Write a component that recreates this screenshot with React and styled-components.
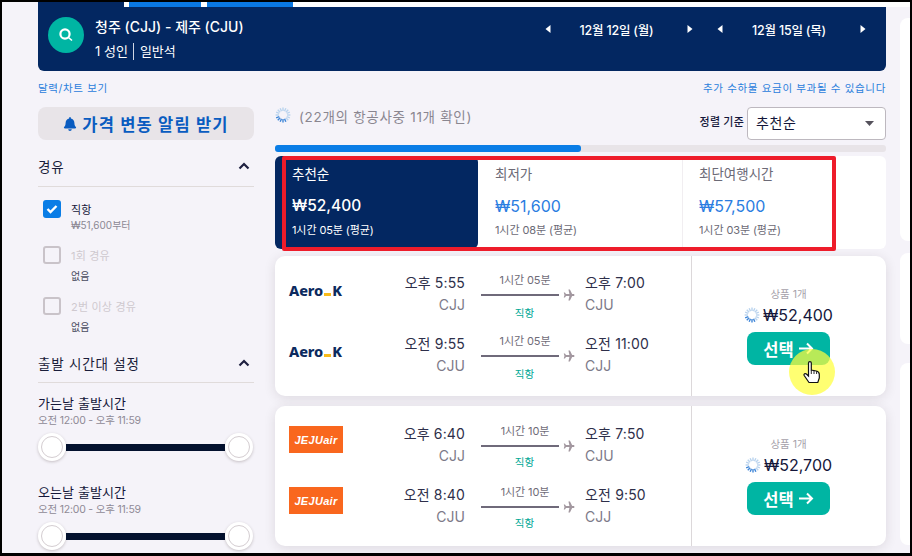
import React from "react";
import styled, { createGlobalStyle } from "styled-components";
import { FaBell } from "react-icons/fa";

const Global = createGlobalStyle`
  html, body { margin: 0; padding: 0; background: #000; }
  * { box-sizing: border-box; }
  body { font-family: Inter, "Noto Sans CJK KR", "Noto Sans", sans-serif; }
`;

const Frame = styled.div`
  position: relative;
  width: 912px;
  height: 556px;
  overflow: hidden;
  display: flex;
  border-style: solid;
  border-color: #000;
  border-width: 2px 2px 3px 2px;
  background: #f5f3f9;
`;
const Main = styled.div`
  width: 848px;
  margin-left: 36px;
  flex: none;
`;
const Rail = styled.div`
  width: 10px;
  margin-left: 14px;
  flex: none;
  display: flex;
  flex-direction: column;
  padding-top: 16px;
`;
const RailPanel = styled.div`
  background: #fff;
  height: ${(p) => p.$h}px;
  margin-bottom: ${(p) => p.$gap}px;
  border-radius: 8px 0 0 8px;
`;
const TopStrip = styled.div`
  position: absolute;
  top: 0;
  left: 122px;
  right: 0;
  height: 5px;
  background: #fff;
  display: flex;
  padding-left: 5px;
`;
const StripTab = styled.div`
  width: ${(p) => p.$w}px;
  margin-right: 6px;
  background: #0a78e2;
`;
const Header = styled.header`
  height: 69px;
  background: #032761;
  border-radius: 0 0 6px 6px;
  display: flex;
  padding: 15px 0 0 10px;
  color: #fff;
`;
const SearchBadge = styled.div`
  width: 36px;
  height: 36px;
  border-radius: 50%;
  background: #00b5a3;
  display: flex;
  align-items: center;
  justify-content: center;
  flex: none;
`;
const Route = styled.div`
  margin-left: 11px;
  margin-top: -1px;
`;
const RouteTitle = styled.div`
  font-size: 14px;
  line-height: 22px;
  font-weight: 500;
`;
const RouteMeta = styled.div`
  margin-top: 4px;
  display: flex;
  align-items: center;
  font-size: 13px;
  line-height: 18px;
`;
const MetaDivider = styled.span`
  width: 1px;
  height: 17px;
  background: #cfd6e4;
  margin: 0 6px 0 5px;
`;
const DateGroup = styled.div`
  margin-left: auto;
  margin-top: 1px;
  display: flex;
  align-items: flex-start;
  padding-right: 20px;
`;
const DateNav = styled.div`
  width: ${(p) => p.$w}px;
  height: 22px;
  display: flex;
  align-items: center;
  justify-content: space-between;
  margin-left: ${(p) => p.$ml || 0}px;
`;
const DateText = styled.span`
  font-size: 12.5px;
  font-weight: 500;
  letter-spacing: -0.2px;
  margin-right: 5px;
`;
const LinkRow = styled.div`
  height: 36px;
  display: flex;
  align-items: center;
  justify-content: space-between;
  padding-bottom: 3px;
`;
const SmallLink = styled.span`
  font-size: 10.5px;
  color: #2a80dc;
  letter-spacing: 0.65px;
`;
const Columns = styled.div`
  display: flex;
  gap: 21px;
`;
const Sidebar = styled.aside`
  width: 216px;
  flex: none;
`;
const AlertButton = styled.div`
  height: 33px;
  border-radius: 8px;
  background: #e8e4e8;
  display: flex;
  align-items: center;
  justify-content: center;
  gap: 5px;
  color: #0a5cc0;
  font-size: 16.5px;
  font-weight: 700;
  letter-spacing: 1.2px;
`;
const SectionHead = styled.div`
  height: ${(p) => p.$h}px;
  margin-top: ${(p) => p.$mt}px;
  padding-top: 8px;
  border-bottom: 1px solid #e0dbdb;
  display: flex;
  align-items: flex-start;
  justify-content: space-between;
  padding-right: 4px;
  color: #1a1d3a;
  font-size: 13.5px;
  line-height: 20px;
  letter-spacing: 0.8px;
`;
const Option = styled.div`
  height: ${(p) => p.$h}px;
  padding-left: 5px;
  display: flex;
  gap: 10px;
`;
const Box = styled.div`
  width: 18px;
  height: 18px;
  flex: none;
  border-radius: 3px;
  display: flex;
  align-items: center;
  justify-content: center;
  background: ${(p) => (p.$checked ? "#0a7de6" : "transparent")};
  border: ${(p) => (p.$checked ? "none" : "2px solid #c9c3c9")};
`;
const OptionBody = styled.div`
  display: flex;
  flex-direction: column;
  padding-top: 1px;
`;
const OptionLabel = styled.span`
  font-size: 11px;
  line-height: 18px;
  color: ${(p) => (p.$off ? "#cfc9cf" : "#14163a")};
  letter-spacing: 0.2px;
`;
const OptionSub = styled.span`
  font-size: 10px;
  line-height: 14px;
  margin-top: ${(p) => p.$mt}px;
  color: ${(p) => (p.$dark ? "#4a4c60" : "#8c8894")};
`;
const TimeBlock = styled.div`
  height: 89px;
  padding-top: 12px;
`;
const TimeTitle = styled.div`
  font-size: 13px;
  line-height: 16px;
  color: #14163a;
  letter-spacing: 0.1px;
`;
const TimeSub = styled.div`
  font-size: 10.5px;
  line-height: 14px;
  margin-top: 3px;
  color: #8f8a96;
  letter-spacing: -0.2px;
`;
const Slider = styled.div`
  margin-top: 5px;
  display: flex;
  align-items: center;
  width: 215px;
`;
const Handle = styled.div`
  width: 28px;
  height: 28px;
  flex: none;
  border-radius: 50%;
  background: #fff;
  box-shadow: 0 1px 3px rgba(60, 40, 40, 0.25);
  display: flex;
  align-items: center;
  justify-content: center;
  &::after {
    content: "";
    width: 20px;
    height: 20px;
    border-radius: 50%;
    border: 1px solid #d4cdd1;
  }
`;
const Track = styled.div`
  flex: 1;
  height: 7px;
  background: #03112e;
`;
const Results = styled.section`
  width: 611px;
  flex: none;
  position: relative;
`;
const StatusRow = styled.div`
  height: 33px;
  display: flex;
  align-items: flex-start;
`;
const StatusText = styled.span`
  margin-left: 8px;
  color: #8a8690;
  font-size: 13.5px;
  line-height: 20px;
  letter-spacing: 0.7px;
`;
const SortLabel = styled.span`
  margin-left: auto;
  margin-top: 7px;
  font-size: 11px;
  line-height: 16px;
  font-weight: 500;
  color: #14163a;
  letter-spacing: 0.2px;
`;
const Select = styled.div`
  width: 139px;
  height: 33px;
  margin-left: 3px;
  background: #fff;
  border: 1px solid #bdb8bf;
  border-radius: 4px;
  display: flex;
  align-items: center;
  justify-content: space-between;
  padding: 0 11px 3px 8px;
  font-size: 14px;
  letter-spacing: 0.6px;
  color: #14163a;
`;
const SelectCaret = styled.svg`
  margin-top: 3px;
`;
const Progress = styled.div`
  height: 7px;
  margin-top: 5px;
  background: #e8e4e8;
  border-radius: 3px;
  overflow: hidden;
`;
const ProgressFill = styled.div`
  height: 100%;
  background: #0a7de6;
  border-radius: 0 3px 3px 0;
`;
const SortTabs = styled.div`
  position: relative;
  margin-top: 4px;
  height: 93px;
  background: #fff;
  border-radius: 6px;
  display: flex;
`;
const SortTab = styled.div`
  width: ${(p) => p.$w}px;
  padding-left: ${(p) => p.$pl}px;
  padding-top: 9px;
  background: ${(p) => (p.$active ? "#032761" : "transparent")};
  border-radius: ${(p) => (p.$active ? "6px" : "0")};
  color: ${(p) => (p.$active ? "#fff" : "#6c6a76")};
  border-right: ${(p) => (p.$line ? "1px solid #f1eef1" : "none")};
`;
const TabName = styled.div`
  font-size: 13.5px;
  line-height: 18px;
`;
const TabPrice = styled.div`
  margin-top: 13px;
  font-size: ${(p) => (p.$active ? 15.5 : 16)}px;
  line-height: 20px;
  font-weight: ${(p) => (p.$active ? 500 : 400)};
  color: ${(p) => (p.$active ? "#fff" : "#2a7de1")};
`;
const TabMeta = styled.div`
  margin-top: 6px;
  font-size: 11px;
  line-height: 16px;
  letter-spacing: -0.1px;
`;
const RedMark = styled.div`
  position: absolute;
  left: 7px;
  top: 0;
  width: 554px;
  height: 95px;
  border: 4px solid #ee1c2a;
  border-radius: 2px;
  pointer-events: none;
`;
const FlightCard = styled.article`
  height: 140px;
  margin-top: ${(p) => p.$mt}px;
  background: #fff;
  border-radius: 10px;
  box-shadow: 0 2px 12px rgba(50, 30, 40, 0.12);
  display: flex;
`;
const Legs = styled.div`
  width: 416px;
  flex: none;
  padding-top: ${(p) => p.$pt}px;
  padding-left: 14px;
`;
const Leg = styled.div`
  height: 61px;
  display: grid;
  grid-template-columns: 100px 76px 110px 1fr;
`;
const LogoCell = styled.div`
  display: flex;
  align-items: center;
  height: ${(p) => p.$h}px;
`;
const AeroLogo = styled.div`
  display: flex;
  align-items: baseline;
  color: #0c2a5e;
  font-family: "Noto Sans", sans-serif;
  font-weight: 800;
  font-size: 14.5px;
  letter-spacing: -0.1px;
`;
const AeroDash = styled.span`
  display: inline-block;
  width: 7px;
  height: 3px;
  margin: 0 1px;
  background: #f7bb1b;
`;
const JejuLogo = styled.div`
  width: 54px;
  height: 27px;
  background: #f9671e;
  color: #fff;
  display: flex;
  align-items: center;
  justify-content: center;
  font-family: "Liberation Sans", sans-serif;
  font-style: italic;
  font-weight: 700;
  font-size: 11px;
  letter-spacing: 0.3px;
`;
const TimeCol = styled.div`
  text-align: ${(p) => p.$align};
  padding-left: ${(p) => (p.$align === "left" ? 10 : 0)}px;
  white-space: nowrap;
`;
const Clock = styled.div`
  font-size: 14px;
  line-height: 22px;
  font-weight: 400;
  color: #2e2f4a;
  letter-spacing: 0.15px;
`;
const Code = styled.div`
  font-size: 14px;
  line-height: 22px;
  color: #7d7a88;
`;
const Mid = styled.div`
  padding-left: 16px;
  display: flex;
  flex-direction: column;
`;
const Duration = styled.div`
  width: 88px;
  height: 16px;
  text-align: center;
  font-size: 11px;
  line-height: 16px;
  color: #6f6c78;
  letter-spacing: -0.1px;
`;
const PathRow = styled.div`
  height: 14px;
  display: flex;
  align-items: center;
  gap: 4px;
`;
const PathLine = styled.div`
  width: 79px;
  height: ${(p) => p.$h}px;
  background: #6f6a7a;
`;
const Direct = styled.div`
  width: 87px;
  height: 16px;
  margin-top: ${(p) => p.$mt}px;
  text-align: center;
  font-size: 10.5px;
  line-height: 16px;
  color: #00a896;
`;
const PricePanel = styled.div`
  flex: 1;
  border-left: 1px solid #dcd8da;
  padding: 32px 1px 0 0;
  display: flex;
  flex-direction: column;
  align-items: center;
`;
const ProductCount = styled.div`
  font-size: 10.5px;
  line-height: 14px;
  color: #a5a1aa;
`;
const PriceLine = styled.div`
  margin-top: 2px;
  display: flex;
  align-items: center;
  gap: 3px;
  height: 22px;
  font-size: 16px;
  color: #14163a;
`;
const SelectButton = styled.div`
  margin-top: 6px;
  width: 83px;
  height: 33px;
  border-radius: 8px;
  background: #00b5a3;
  color: #fff;
  font-size: 16.5px;
  font-weight: 700;
  display: flex;
  align-items: center;
  justify-content: center;
  gap: 4px;
`;
const CursorHalo = styled.div`
  position: absolute;
  left: 514px;
  top: 242px;
  width: 46px;
  height: 46px;
  border-radius: 50%;
  background: rgba(255, 255, 60, 0.72);
  display: flex;
  align-items: center;
  justify-content: center;
`;
const ChevronIcon = styled.svg`
  margin-top: 5px;
`;
const CheckGap = styled.div`
  height: 13px;
`;

const Tri = ({ dir }) => (
  <svg width="6" height="8" viewBox="0 0 6 8">
    <polygon points={dir === "l" ? "5.5,0 0.5,4 5.5,8" : "0.5,0 5.5,4 0.5,8"} fill="#fff" />
  </svg>
);

const Chevron = () => (
  <ChevronIcon width="12" height="8" viewBox="0 0 12 8">
    <path d="M1.5 6.5 L6 2 L10.5 6.5" fill="none" stroke="#1f2040" strokeWidth="2.2" />
  </ChevronIcon>
);

const Spinner = ({ size = 16 }) => {
  const ticks = Array.from({ length: 16 }, (_, i) => i);
  return (
    <svg width={size} height={size} viewBox="0 0 16 16">
      {ticks.map((i) => {
        const a = (i / 16) * Math.PI * 2;
        const shade = i > 2 && i < 8 ? "#3f86d8" : "#b9d3ee";
        return (
          <line
            key={i}
            x1={8 + 4 * Math.cos(a)}
            y1={8 + 4 * Math.sin(a)}
            x2={8 + 7.4 * Math.cos(a)}
            y2={8 + 7.4 * Math.sin(a)}
            stroke={shade}
            strokeWidth="1.4"
          />
        );
      })}
    </svg>
  );
};

const PlaneIcon = () => (
  <svg width="12" height="12" viewBox="0 0 24 24">
    <path
      d="M14 1 L11 1 L13 10 L6 10 L4 7 L1.5 7 L3 12 L1.5 17 L4 17 L6 14 L13 14 L11 23 L14 23 L18.5 14 L22 14 Q24.5 12 22 10 L18.5 10 Z"
      fill="#a2979f"
    />
  </svg>
);

const Arrow = () => (
  <svg width="16" height="13" viewBox="0 0 16 13">
    <path d="M1 6.5 H14 M9 1.5 L14 6.5 L9 11.5" fill="none" stroke="#fff" strokeWidth="2" />
  </svg>
);

const flights = [
  {
    logo: "aero",
    mt: 7,
    pt: 16,
    directGap: 4,
    price: "₩52,400",
    legs: [
      { dep: "오후 5:55", from: "CJJ", dur: "1시간 05분", arr: "오후 7:00", to: "CJU", h: 1.5 },
      { dep: "오전 9:55", from: "CJU", dur: "1시간 05분", arr: "오전 11:00", to: "CJJ", h: 2 },
    ],
  },
  {
    logo: "jeju",
    mt: 10,
    pt: 17,
    directGap: 2,
    price: "₩52,700",
    legs: [
      { dep: "오후 6:40", from: "CJJ", dur: "1시간 10분", arr: "오후 7:50", to: "CJU", h: 2 },
      { dep: "오전 8:40", from: "CJU", dur: "1시간 10분", arr: "오전 9:50", to: "CJJ", h: 2 },
    ],
  },
];

const tabs = [
  { name: "추천순", price: "₩52,400", meta: "1시간 05분 (평균)", w: 203, pl: 17, active: true },
  { name: "최저가", price: "₩51,600", meta: "1시간 08분 (평균)", w: 205, pl: 17, line: true },
  { name: "최단여행시간", price: "₩57,500", meta: "1시간 03분 (평균)", w: 203, pl: 16 },
];

const TimeFilter = ({ title }) => (
  <TimeBlock>
    <TimeTitle>{title}</TimeTitle>
    <TimeSub>오전 12:00 - 오후 11:59</TimeSub>
    <Slider>
      <Handle />
      <Track />
      <Handle />
    </Slider>
  </TimeBlock>
);

export default function App() {
  return (
    <>
      <Global />
      <Frame>
        <TopStrip>
          <StripTab $w={72} />
          <StripTab $w={86} />
        </TopStrip>
        <Main>
          <Header>
            <SearchBadge>
              <svg width="18" height="18" viewBox="0 0 18 18">
                <circle cx="8" cy="8" r="4.6" fill="none" stroke="#fff" strokeWidth="2.2" />
                <path d="M11.5 11.5 L15 14.5" stroke="#fff" strokeWidth="1.6" />
              </svg>
            </SearchBadge>
            <Route>
              <RouteTitle>청주 (CJJ) - 제주 (CJU)</RouteTitle>
              <RouteMeta>
                1 성인
                <MetaDivider />
                일반석
              </RouteMeta>
            </Route>
            <DateGroup>
              <DateNav $w={148}>
                <Tri dir="l" />
                <DateText>12월 12일 (월)</DateText>
                <Tri dir="r" />
              </DateNav>
              <DateNav $w={149} $ml={24}>
                <Tri dir="l" />
                <DateText>12월 15일 (목)</DateText>
                <Tri dir="r" />
              </DateNav>
            </DateGroup>
          </Header>
          <LinkRow>
            <SmallLink>달력/차트 보기</SmallLink>
            <SmallLink>추가 수하물 요금이 부과될 수 있습니다</SmallLink>
          </LinkRow>
          <Columns>
            <Sidebar>
              <AlertButton>
                <FaBell size={14} />
                가격 변동 알림 받기
              </AlertButton>
              <SectionHead $h={38} $mt={9}>
                경유
                <Chevron />
              </SectionHead>
              <CheckGap />
              <Option $h={46}>
                <Box $checked>
                  <svg width="12" height="10" viewBox="0 0 12 10">
                    <path d="M1.5 5 L4.5 8 L10.5 2" fill="none" stroke="#fff" strokeWidth="2.4" />
                  </svg>
                </Box>
                <OptionBody>
                  <OptionLabel>직항</OptionLabel>
                  <OptionSub $mt={-1}>₩51,600부터</OptionSub>
                </OptionBody>
              </Option>
              <Option $h={51}>
                <Box />
                <OptionBody>
                  <OptionLabel $off>1회 경유</OptionLabel>
                  <OptionSub $mt={4} $dark>없음</OptionSub>
                </OptionBody>
              </Option>
              <Option $h={49}>
                <Box />
                <OptionBody>
                  <OptionLabel $off>2번 이상 경유</OptionLabel>
                  <OptionSub $mt={4} $dark>없음</OptionSub>
                </OptionBody>
              </Option>
              <SectionHead $h={37} $mt={0}>
                출발 시간대 설정
                <Chevron />
              </SectionHead>
              <TimeFilter title="가는날 출발시간" />
              <TimeFilter title="오는날 출발시간" />
            </Sidebar>
            <Results>
              <StatusRow>
                <Spinner />
                <StatusText>(22개의 항공사중 11개 확인)</StatusText>
                <SortLabel>정렬 기준</SortLabel>
                <Select>
                  추천순
                  <SelectCaret width="9" height="5" viewBox="0 0 9 5">
                    <polygon points="0,0 9,0 4.5,5" fill="#55525c" />
                  </SelectCaret>
                </Select>
              </StatusRow>
              <Progress>
                <ProgressFill style={{ width: "50%" }} />
              </Progress>
              <SortTabs>
                {tabs.map((t) => (
                  <SortTab key={t.name} $w={t.w} $pl={t.pl} $active={t.active} $line={t.line}>
                    <TabName>{t.name}</TabName>
                    <TabPrice $active={t.active}>{t.price}</TabPrice>
                    <TabMeta>{t.meta}</TabMeta>
                  </SortTab>
                ))}
                <RedMark />
              </SortTabs>
              {flights.map((f) => (
                <FlightCard key={f.price} $mt={f.mt}>
                  <Legs $pt={f.pt}>
                    {f.legs.map((l) => (
                      <Leg key={l.dep}>
                        <LogoCell $h={f.logo === "jeju" ? 33 : 35}>
                          {f.logo === "aero" ? (
                            <AeroLogo>
                              Aero
                              <AeroDash />K
                            </AeroLogo>
                          ) : (
                            <JejuLogo>JEJUair</JejuLogo>
                          )}
                        </LogoCell>
                        <TimeCol $align="right">
                          <Clock>{l.dep}</Clock>
                          <Code>{l.from}</Code>
                        </TimeCol>
                        <Mid>
                          <Duration>{l.dur}</Duration>
                          <PathRow>
                            <PathLine $h={l.h} />
                            <PlaneIcon />
                          </PathRow>
                          <Direct $mt={f.directGap}>직항</Direct>
                        </Mid>
                        <TimeCol $align="left">
                          <Clock>{l.arr}</Clock>
                          <Code>{l.to}</Code>
                        </TimeCol>
                      </Leg>
                    ))}
                  </Legs>
                  <PricePanel>
                    <ProductCount>상품 1개</ProductCount>
                    <PriceLine>
                      <Spinner />
                      {f.price}
                    </PriceLine>
                    <SelectButton>
                      선택
                      <Arrow />
                    </SelectButton>
                  </PricePanel>
                </FlightCard>
              ))}
              <CursorHalo>
                <svg width="18" height="23" viewBox="0 0 18 23">
                  <path
                    d="M5.5 2 a1.4 1.4 0 0 1 2.8 0 V9 l5 1 c2 .5 3 1.5 3 3.5 V17 l-1.5 4.5 H6 L1.2 14.5 c-.8-1.5 1-2.6 2.2-1.5 L5.5 15 Z"
                    fill="#fff"
                    stroke="#111"
                    strokeWidth="1.2"
                  />
                  <path d="M8.3 9 V13 M11 9.5 V13 M13.6 10.2 V13" stroke="#111" strokeWidth="0.9" fill="none" />
                </svg>
              </CursorHalo>
            </Results>
          </Columns>
        </Main>
        <Rail>
          <RailPanel $h={223} $gap={12} />
          <RailPanel $h={91} $gap={19} />
          <RailPanel $h={182} $gap={0} />
        </Rail>
      </Frame>
    </>
  );
}
